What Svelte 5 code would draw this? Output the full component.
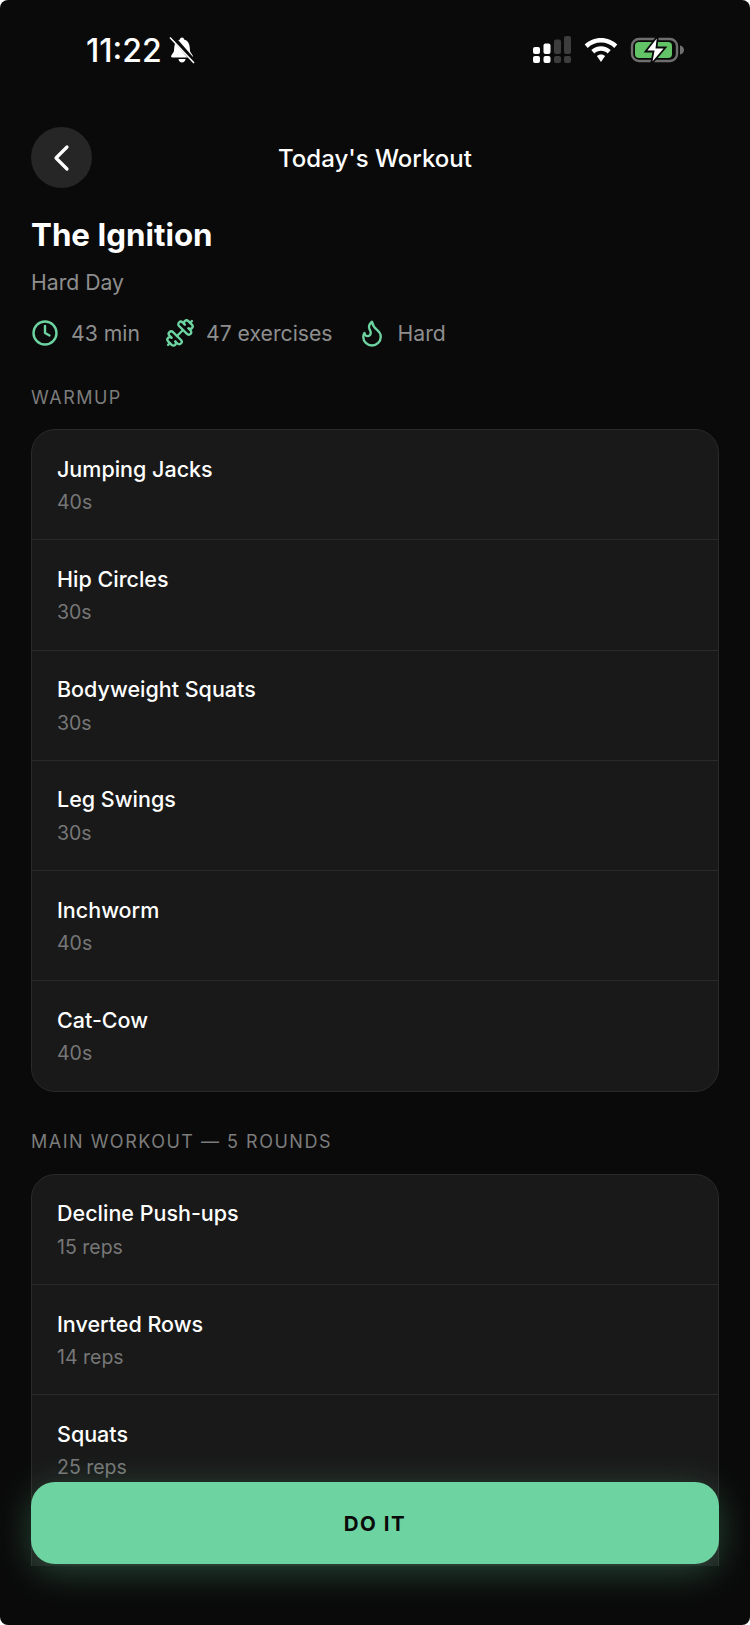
<script>
  const warmup = [
    ['Jumping Jacks', '40s'], ['Hip Circles', '30s'], ['Bodyweight Squats', '30s'],
    ['Leg Swings', '30s'], ['Inchworm', '40s'], ['Cat-Cow', '40s']
  ];
  const main = [['Decline Push-ups', '15 reps'], ['Inverted Rows', '14 reps'], ['Squats', '25 reps']];
</script>

<div class="screen">
  <div class="status">
    <div class="left">
      <span class="time">11:22</span>
      <svg class="bell" width="26" height="28" viewBox="0 0 26 28">
        <path fill="#fff" d="M13 1.500c-1.200 0-2 .8-2.100 2C7.300 4.500 5.600 7.500 5.300 11l-.4 4.500L2.300 19.500c-.6 1 0 2 1.200 2h19c1.200 0 1.800-1 1.200-2l-2.600-4-.4-4.500c-.3-3.500-2-6.500-5.600-7.500-.1-1.200-.9-2-2.100-2z"/>
        <path fill="#fff" d="M9.500 23h7c-.2 2-1.700 3.500-3.500 3.500S9.700 25 9.500 23z"/>
        <path stroke="#0a0a0a" stroke-width="4.500" d="M3.500 1 25.500 26"/>
        <path stroke="#fff" stroke-width="1.600" d="M1 1.500 25 27"/>
      </svg>
    </div>
    <div class="right">
      <svg width="40" height="28" viewBox="0 0 40 28">
        <g fill="#fff">
          <rect x="1" y="11" width="7" height="7" rx="2"/><rect x="1" y="20" width="7" height="7" rx="2"/>
          <rect x="11.500" y="7.500" width="7" height="10.500" rx="2"/><rect x="11.500" y="20" width="7" height="7" rx="2"/>
        </g>
        <g fill="#3d3d3d">
          <rect x="22" y="3.500" width="7" height="14.500" rx="2"/><rect x="22" y="20" width="7" height="7" rx="2"/>
          <rect x="32" y="0" width="7" height="18" rx="2"/><rect x="32" y="20" width="7" height="7" rx="2"/>
        </g>
      </svg>
      <svg class="wifi" width="34" height="26" viewBox="0 0 34 26">
        <path fill="#fff" d="M17 1c6.300 0 12 2.400 16.300 6.500l-3 3.400C26.800 7.500 22.100 5.500 17 5.500S7.200 7.500 3.700 10.900l-3-3.400C5 3.400 10.700 1 17 1zM17 9.300c3.700 0 7.100 1.400 9.700 3.800l-3 3.300C22 14.700 19.600 13.700 17 13.700s-5 1-6.700 2.700l-3-3.300C9.900 10.700 13.300 9.300 17 9.300zM17 17.400c1.600 0 3.100.6 4.100 1.700L17 25l-4.100-5.900c1-1.100 2.500-1.700 4.100-1.700z"/>
      </svg>
      <svg width="56" height="30" viewBox="0 0 56 30">
        <rect x="2" y="4" width="45" height="22" rx="7" fill="none" stroke="#6f6f6f" stroke-width="2.400"/>
        <rect x="5" y="7" width="37" height="16" rx="4" fill="#63c467"/>
        <path fill="#6f6f6f" d="M50 10.500c2.400.4 4 2.200 4 4.500s-1.600 4.100-4 4.500z"/>
        <path fill="#fff" stroke="#0a0a0a" stroke-width="1.800" d="M28 .5 L15.500 16.500h8L21 29.500 35.500 12.500h-9z"/>
      </svg>
    </div>
  </div>

  <header class="nav">
    <button class="back" aria-label="Back">
      <svg width="20" height="28" viewBox="0 0 20 28"><path d="M15 3 4 14l11 11" fill="none" stroke="#fff" stroke-width="3.200" stroke-linecap="round" stroke-linejoin="round"/></svg>
    </button>
    <h2>Today's Workout</h2>
  </header>

  <h1>The Ignition</h1>
  <p class="sub">Hard Day</p>

  <div class="meta">
    <div class="chip">
      <svg width="28" height="28" viewBox="0 0 28 28" fill="none" stroke="#6dd3a0" stroke-width="2.400" stroke-linecap="round" stroke-linejoin="round"><circle cx="14" cy="14" r="11.500"/><path d="M14 7v7l4.500 2.500"/></svg>
      <span>43 min</span>
    </div>
    <div class="chip c2">
      <svg width="30" height="30" viewBox="0 0 24 24" fill="none" stroke="#6dd3a0" stroke-width="1.900" stroke-linecap="round" stroke-linejoin="round">
        <path d="M17.596 12.768a2 2 0 1 0 2.829-2.829l-1.768-1.767a2 2 0 0 0 2.828-2.829l-2.828-2.828a2 2 0 0 0-2.829 2.828l-1.767-1.768a2 2 0 1 0-2.829 2.829z"/>
        <path d="m2.500 21.500 1.400-1.400"/>
        <path d="m20.100 3.900 1.400-1.400"/>
        <path d="M5.343 21.485a2 2 0 1 0 2.829-2.828l1.767 1.768a2 2 0 1 0 2.829-2.829l-6.364-6.364a2 2 0 1 0-2.829 2.829l1.768 1.767a2 2 0 0 0-2.828 2.829z"/>
        <path d="m9.600 14.400 4.800-4.800"/>
      </svg>
      <span>47 exercises</span>
    </div>
    <div class="chip c3">
      <svg width="30" height="30" viewBox="0 0 24 24" fill="none" stroke="#6dd3a0" stroke-width="1.900" stroke-linecap="round" stroke-linejoin="round"><path d="M8.500 14.500A2.500 2.500 0 0 0 11 12c0-1.380-.5-2-1-3-1.072-2.143-.224-4.054 2-6 .5 2.500 2 4.900 4 6.500 2 1.600 3 3.500 3 5.500a7 7 0 1 1-14 0c0-1.153.433-2.294 1-3a2.500 2.500 0 0 0 2.500 2.500z"/></svg>
      <span>Hard</span>
    </div>
  </div>

  <div class="label">WARMUP</div>
  <div class="card">
    {#each warmup as [n, d]}
      <div class="row"><div class="name">{n}</div><div class="detail">{d}</div></div>
    {/each}
  </div>

  <div class="label l2">MAIN WORKOUT — 5 ROUNDS</div>
  <div class="clip">
    <div class="card tall">
      {#each main as [n, d]}
        <div class="row"><div class="name">{n}</div><div class="detail">{d}</div></div>
      {/each}
    </div>
  </div>

  <button class="cta">DO IT</button>
</div>

<style>
  :global(body) { margin: 0; background: #fff; }
  .screen {
    position: relative; width: 750px; height: 1625px; overflow: hidden;
    display: flex; flex-direction: column;
    background: #0a0a0a; color: #fff; box-sizing: border-box; padding: 0 31px 59px;
    border-radius: 8px;
    font-family: Inter, "Liberation Sans", sans-serif;
  }
  .status { display: flex; flex: none; justify-content: space-between; align-items: center; height: 100px; padding: 0 0 0 55px; }
  .left { display: flex; align-items: center; gap: 7px; }
  .time { font-size: 32px; font-weight: 500; }
  .right { display: flex; align-items: center; gap: 12px; padding-right: 33px; }
  .nav { position: relative; flex: none; display: flex; align-items: center; justify-content: center; height: 61px; margin-top: 27px; }
  .back { position: absolute; left: 0; top: 0; width: 61px; height: 61px; border-radius: 50%; border: 0; background: #262626; display: flex; align-items: center; justify-content: center; padding: 0; }
  h2 { margin: 2px 0 0; font-size: 24px; font-weight: 500; }
  h1 { margin: 23px 0 0; font-size: 31.300px; font-weight: 700; line-height: 48px; }
  .sub { margin: 8px 0 0; font-size: 21.200px; color: #8e8e8e; line-height: 30px; }
  .meta { display: flex; flex: none; margin-top: 20px; height: 32px; align-items: center; font-size: 21.200px; color: #8e8e8e; }
  .chip { display: flex; align-items: center; gap: 12px; }
  .c2 { margin-left: 25px; gap: 11px; }
  .c3 { margin-left: 24px; gap: 11px; }
  .label { margin-top: 38px; font-size: 18px; letter-spacing: 1.500px; color: #7c7c7c; line-height: 22px; }
  .l2 { margin-top: 39.500px; }
  .card { margin-top: 20px; background: #191919; border: 1.500px solid #2a2a2a; border-radius: 24px; box-sizing: border-box; }
  .tall { height: 480px; margin-top: 20.500px; }
  .row { height: 110.250px; padding: 23.500px 25px 0; box-sizing: border-box; border-bottom: 1.500px solid #2a2a2a; }
  .row:last-child { border-bottom: 0; height: 109.500px; }
  .tall .row:last-child { border-bottom: 1.500px solid #2a2a2a; height: 110.250px; }
  .name { font-size: 21.500px; font-weight: 500; line-height: 30px; color: #fff; }
  .detail { margin-top: 4.500px; font-size: 19.500px; color: #777; line-height: 28px; }
  .clip { flex: 1; min-height: 0; overflow: hidden; }
  .cta { position: absolute; left: 31px; top: 1482px; width: 688px; height: 82px; border: 0; border-radius: 24px; background: #6dd3a0; color: #0a0a0a; font: 700 20.500px Inter, "Liberation Sans", sans-serif; letter-spacing: 1.500px; box-shadow: 0 8px 36px rgba(109,211,160,.3); }
</style>
